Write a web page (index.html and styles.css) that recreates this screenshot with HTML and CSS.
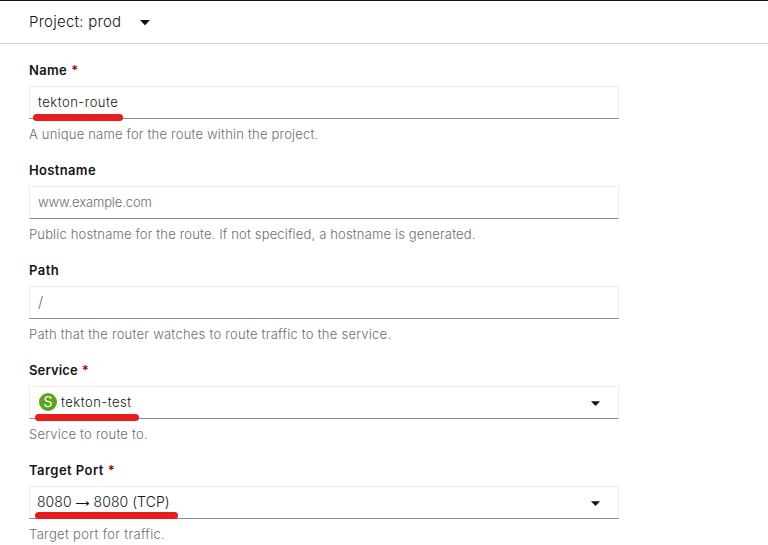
FILE: index.html
```html
<!DOCTYPE html>
<html lang="en">
<head>
<meta charset="utf-8">
<title>Create Route</title>
<link rel="stylesheet" href="styles.css">
</head>
<body>
<header class="project-bar">
  <span class="project-name">Project: prod</span>
  <svg class="caret caret-project" viewBox="0 0 10 5"><path d="M0 0H10L5.6 4.7Q5 5.2 4.4 4.7Z"/></svg>
</header>
<main class="form">
  <section class="field">
    <label class="label"><span class="t-name">Name</span><span class="required">*</span></label>
    <div class="control"><span class="value t-route">tekton-route</span><i class="mark mark-name"></i></div>
    <p class="help h-name">A unique name for the route within the project.</p>
  </section>
  <section class="field">
    <label class="label"><span class="t-name">Hostname</span></label>
    <div class="control"><span class="value placeholder t-example">www.example.com</span></div>
    <p class="help h-host">Public hostname for the route. If not specified, a hostname is generated.</p>
  </section>
  <section class="field">
    <label class="label"><span class="t-path">Path</span></label>
    <div class="control"><span class="value placeholder slash">/</span></div>
    <p class="help h-path">Path that the router watches to route traffic to the service.</p>
  </section>
  <section class="field">
    <label class="label"><span class="t-service">Service</span><span class="required">*</span></label>
    <div class="control select"><span class="badge">S</span><span class="value t-route">tekton-test</span><svg class="caret" viewBox="0 0 10 5"><path d="M0 0H10L5.6 4.7Q5 5.2 4.4 4.7Z"/></svg><i class="mark mark-service"></i></div>
    <p class="help h-service">Service to route to.</p>
  </section>
  <section class="field">
    <label class="label"><span class="t-path">Target Port</span><span class="required">*</span></label>
    <div class="control select"><span class="value t-port">8080 <svg class="arrow" viewBox="0 0 14 8"><path d="M0 4.5H12.5M10 2.5L13 4.5L10 6.5"/></svg> 8080 (TCP)</span><svg class="caret" viewBox="0 0 10 5"><path d="M0 0H10L5.6 4.7Q5 5.2 4.4 4.7Z"/></svg><i class="mark mark-port"></i></div>
    <p class="help h-port">Target port for traffic.</p>
  </section>
</main>
</body>
</html>
```
FILE: styles.css
```css
* { box-sizing: border-box; }
body {
  margin: 0;
  height: 545px;
  overflow: hidden;
  background: #fff;
  color: #151515;
  font-family: Inter, "Noto Sans", sans-serif;
  font-size: 13px;
  font-weight: 300;
}
.project-bar {
  display: flex;
  align-items: center;
  height: 44px;
  padding-left: 29px;
  border-top: 1px solid #151515;
  border-bottom: 1px solid #d2d2d2;
}
.project-name {
  width: 111px;
  padding-bottom: 2px;
  font-size: 15px;
  letter-spacing: 0.25px;
  white-space: nowrap;
}
.caret { width: 9px; height: 5px; fill: #151515; }
.caret-project { width: 10px; }
.form { width: 619px; padding: 17px 0 0 29px; }
.field { height: 100px; }
.label {
  display: flex;
  height: 25px;
  line-height: 19px;
  font-weight: 600;
  white-space: nowrap;
}
.required { margin-left: 4px; color: #a30000; }
.t-name { letter-spacing: 0.35px; }
.t-path { letter-spacing: 0.45px; }
.t-service { letter-spacing: 0.15px; }
.control {
  position: relative;
  display: flex;
  align-items: center;
  height: 33px;
  padding-left: 8px;
  border: 1px solid #ededed;
  border-bottom-color: #8a8d90;
  white-space: nowrap;
}
.value { padding-bottom: 2px; }
.placeholder { color: #6a6e73; }
.select { padding: 0 18px 0 7px; }
.select .caret { margin: 2px 0 0 auto; }
.t-route { letter-spacing: 0.5px; }
.t-example { letter-spacing: -0.12px; }
.slash { font-size: 15px; }
.t-port { font-size: 14px; letter-spacing: 0.05px; }
.badge {
  width: 18px;
  height: 18px;
  margin: 0 4px 1px 2px;
  border-radius: 50%;
  background: #59a31d;
  color: #fff;
  font-size: 14px;
  font-weight: 400;
  line-height: 18px;
  text-align: center;
}
.arrow { width: 14px; height: 8px; fill: none; stroke: #151515; stroke-width: 1; }
.help { margin: 0; color: #6a6e73; line-height: 30px; white-space: nowrap; }
.h-name { letter-spacing: 0.2px; }
.h-host { letter-spacing: 0.16px; }
.h-path { letter-spacing: 0.25px; }
.h-service { letter-spacing: 0.22px; }
.h-port { letter-spacing: 0.33px; }
.mark {
  position: absolute;
  height: 7px;
  border-radius: 3.5px;
  background: #e81e1e;
}
.mark-name { left: 2.7px; top: 27.4px; width: 90.7px; }
.mark-service { left: 4.7px; top: 27.4px; width: 104.3px; }
.mark-port { left: 4.7px; top: 24.5px; width: 143.6px; }
```
